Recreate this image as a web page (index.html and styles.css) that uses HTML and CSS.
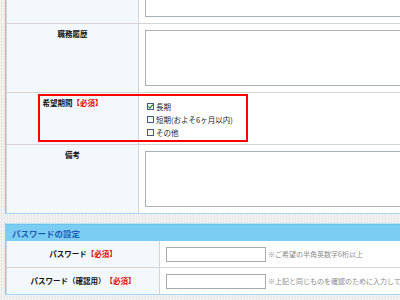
FILE: index.html
```html
<!DOCTYPE html>
<html lang="ja">
<head>
<meta charset="utf-8">
<link rel="stylesheet" href="styles.css">
</head>
<body>
<div class="page">
  <div class="table table-top">
    <div class="row row-tall">
      <div class="label"></div>
      <div class="value"><div class="textarea"></div></div>
    </div>
    <div class="row row-tall">
      <div class="label">職務履歴</div>
      <div class="value"><div class="textarea"></div></div>
    </div>
    <div class="row row-check">
      <div class="label">希望期間<span class="req">【必須】</span></div>
      <div class="value checks">
        <div class="check"><span class="box"><svg viewBox="0 0 7 7" width="7" height="7"><path d="M1.2 3.4 L2.9 5.1 L5.9 1.6" fill="none" stroke="#1a9a2a" stroke-width="1.3"/></svg></span>長期</div>
        <div class="check"><span class="box"></span>短期(およそ6ヶ月以内)</div>
        <div class="check"><span class="box"></span>その他</div>
      </div>
      <div class="highlight"></div>
    </div>
    <div class="row row-tall">
      <div class="label">備考</div>
      <div class="value"><div class="textarea"></div></div>
    </div>
  </div>

  <div class="table table-pw">
    <div class="heading">パスワードの設定</div>
    <div class="row row-pw">
      <div class="label label-mid">パスワード<span class="req">【必須】</span></div>
      <div class="value value-pw"><div class="input"></div><span class="hint">※ご希望の半角英数字6桁以上</span></div>
    </div>
    <div class="row row-pw">
      <div class="label label-mid">パスワード（確認用）<span class="req">【必須】</span></div>
      <div class="value value-pw"><div class="input"></div><span class="hint">※上記と同じものを確認のために入力して下さい</span></div>
    </div>
  </div>
</div>
</body>
</html>
```
FILE: styles.css
```css
html, body {
  margin: 0;
  padding: 0;
}
body {
  width: 400px;
  height: 300px;
  overflow: hidden;
  font-family: "Noto Sans CJK JP", "Noto Sans", sans-serif;
  color: #222;
  background-color: #eeeeee;
  background-image: repeating-conic-gradient(#e9e9e9 0 25%, #f4f4f4 0 50%);
  background-size: 3px 3px;
}
.page {
  padding-left: 5px;
  width: 700px;
}
.table {
  border-left: 1px solid #8fcbef;
  background: #ffffff;
}
.table-top {
  margin-top: -45px;
  border-bottom: 1px solid #a9d6ef;
}
.row {
  display: grid;
  grid-template-columns: 133px 1fr;
  border-bottom: 1px solid #d4d4d4;
  position: relative;
}
.row:last-child {
  border-bottom: none;
}
.label {
  box-sizing: border-box;
  background: #f3f8fd;
  border-left: 1px solid #d4d4d4;
  border-right: 1px solid #d4d4d4;
  text-align: center;
  font-size: 7.5px;
  font-weight: bold;
  line-height: 12px;
  padding-top: 4px;
  color: #111;
}
.req {
  color: #e60000;
}
.value {
  padding: 6px;
}
.row-tall {
  height: 68px;
}
.textarea {
  box-sizing: border-box;
  width: 420px;
  height: 56px;
  border: 1px solid #aab0b5;
  background: #fff;
}
.row-check {
  height: 51px;
}
.checks {
  padding: 7px 8px 5px;
}
.check {
  display: flex;
  align-items: center;
  height: 13px;
  font-size: 7.5px;
  color: #222;
}
.box {
  box-sizing: border-box;
  width: 7px;
  height: 7px;
  border: 1px solid #3e5d86;
  background: linear-gradient(#f2f2f2, #ffffff);
  margin-right: 2px;
  display: flex;
  align-items: center;
  justify-content: center;
  overflow: visible;
}
.box svg {
  flex: none;
}
.highlight {
  position: absolute;
  left: 32px;
  top: 1px;
  width: 210px;
  height: 48px;
  box-sizing: border-box;
  border: 2px solid #ff0000;
}
.table-pw {
  margin-top: 9px;
  border-top: 1px solid #bfe3f6;
  border-bottom: 1px solid #a9d6ef;
}
.heading {
  height: 17px;
  background: #7ccdf4;
  border-top: 1px solid #6ec3ee;
  box-sizing: border-box;
  padding-left: 6px;
  font-size: 8.5px;
  font-weight: bold;
  line-height: 16px;
  color: #1d5fb6;
}
.row-pw {
  grid-template-columns: 154px 1fr;
  height: 26px;
}
.label-mid {
  padding-top: 0;
  display: flex;
  align-items: center;
  justify-content: center;
}
.value-pw {
  display: flex;
  align-items: center;
  padding: 0 6px;
}
.input {
  box-sizing: border-box;
  width: 100px;
  height: 15px;
  border: 1px solid #a4abb1;
  background: #fff;
  flex: none;
}
.hint {
  margin-left: 2px;
  font-size: 7px;
  color: #8a8a8a;
  white-space: nowrap;
}
```
